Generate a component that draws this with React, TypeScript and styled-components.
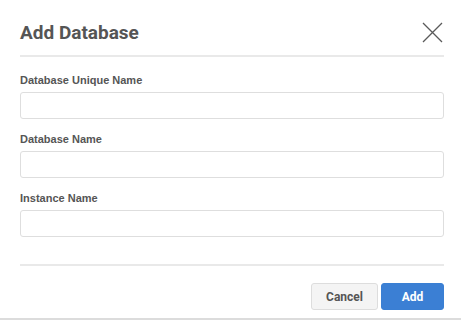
import * as React from 'react'
import styled, {createGlobalStyle} from 'styled-components'

const GlobalStyle = createGlobalStyle`
  html, body {
    margin: 0;
    padding: 0;
    background: #fff;
  }
  * {
    box-sizing: border-box;
  }
`

const Dialog = styled.section`
  width: 461px;
  height: 320px;
  display: flex;
  flex-direction: column;
  padding: 0 17px 0 20px;
  background: #fff;
  border-bottom: 2px solid #dcdcdc;
`

const Header = styled.header`
  display: flex;
  align-items: center;
  justify-content: space-between;
  height: 57px;
  padding-top: 10px;
  border-bottom: 2px solid #e9e9e9;
`

const Title = styled.h2`
  margin: 0;
  font-family: Roboto, "Liberation Sans", sans-serif;
  font-weight: 700;
  font-size: 19px;
  color: #555;
`

const CloseButton = styled.button`
  width: 22px;
  height: 22px;
  margin-right: 1px;
  padding: 0;
  border: none;
  background: none;
  display: flex;
  align-items: center;
  justify-content: center;
  svg {
    display: block;
  }
`

const Body = styled.div`
  display: flex;
  flex-direction: column;
  gap: 13px;
  padding: 16px 0 27px;
  border-bottom: 2px solid #e9e9e9;
`

const Field = styled.label`
  display: flex;
  flex-direction: column;
  gap: 5px;
`

const Label = styled.span`
  font-family: "Liberation Sans", Arial, sans-serif;
  font-weight: 700;
  font-size: 11px;
  line-height: 14px;
  color: #555;
`

const Input = styled.input`
  height: 27px;
  width: 100%;
  border: 1px solid #dedede;
  border-radius: 3px;
  padding: 0 8px;
  font-family: "Liberation Sans", Arial, sans-serif;
  font-size: 12px;
  outline: none;
`

const Footer = styled.footer`
  display: flex;
  justify-content: flex-end;
  gap: 3px;
  padding-top: 17px;
`

const Button = styled.button<{$primary?: boolean}>`
  height: 27px;
  min-width: ${(p) => (p.$primary ? '63px' : '66px')};
  padding: 0 14px;
  border-radius: 3px;
  border: 1px solid ${(p) => (p.$primary ? '#3a7fd3' : '#dddddd')};
  background: ${(p) => (p.$primary ? '#3b7fd4' : '#f4f4f4')};
  color: ${(p) => (p.$primary ? '#fff' : '#555')};
  font-family: Roboto, "Liberation Sans", sans-serif;
  font-weight: 700;
  font-size: 12px;
`

const fields = ['Database Unique Name', 'Database Name', 'Instance Name']

const App: React.FC = () => {
  return (
    <>
      <GlobalStyle />
      <Dialog>
        <Header>
          <Title>Add Database</Title>
          <CloseButton aria-label="Close">
            <svg width="21" height="21" viewBox="0 0 21 21">
              <path d="M1 1L20 20M20 1L1 20" stroke="#5a5a5a" strokeWidth="1.3" fill="none" />
            </svg>
          </CloseButton>
        </Header>
        <Body>
          {fields.map((f) => (
            <Field key={f}>
              <Label>{f}</Label>
              <Input type="text" />
            </Field>
          ))}
        </Body>
        <Footer>
          <Button>Cancel</Button>
          <Button $primary>Add</Button>
        </Footer>
      </Dialog>
    </>
  )
}

export default App
